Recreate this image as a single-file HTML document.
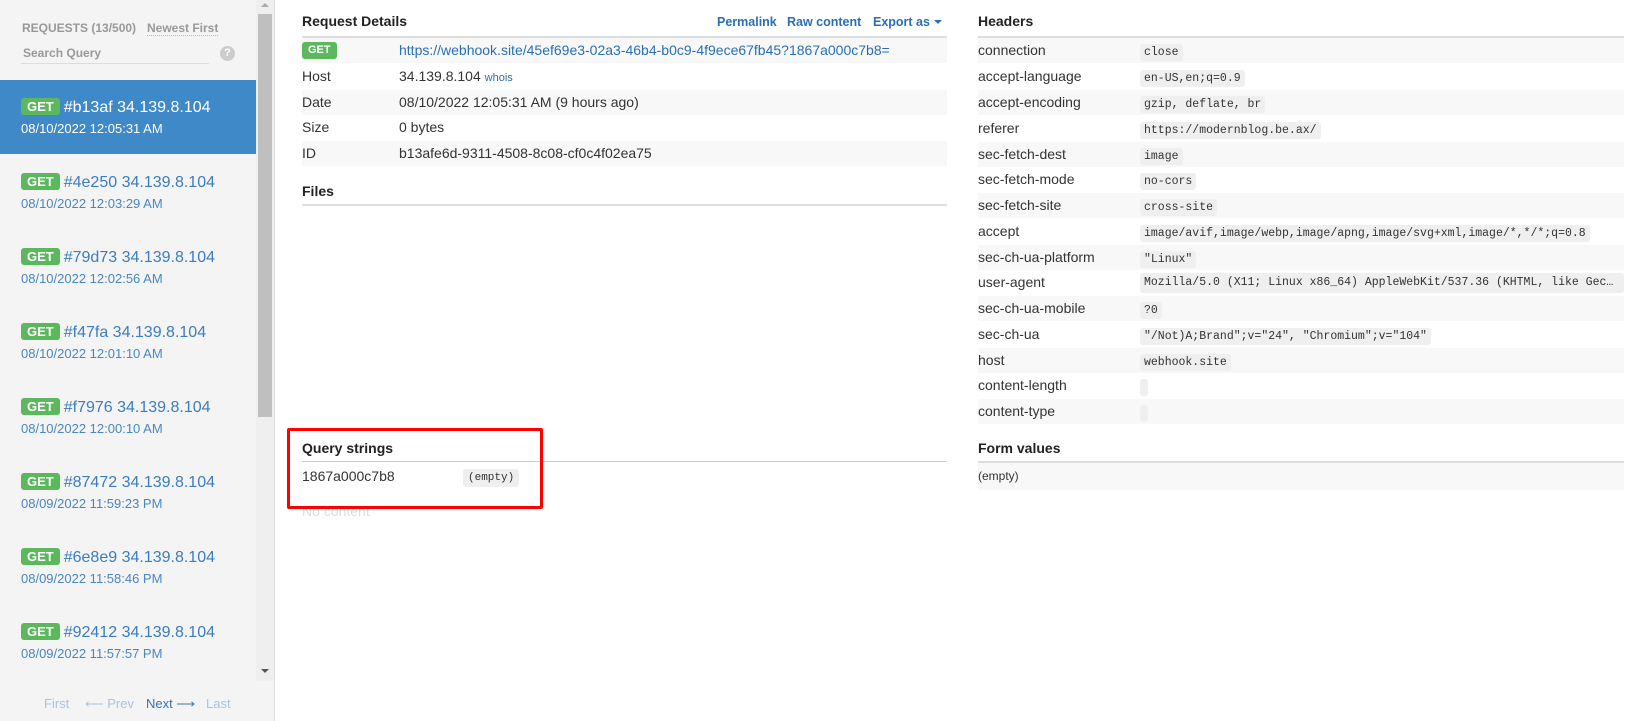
<!DOCTYPE html>
<html><head><meta charset="utf-8"><style>
*{box-sizing:border-box;margin:0;padding:0}
body{width:1650px;height:721px;overflow:hidden;font-family:"Liberation Sans",Arial,sans-serif;font-size:14px;color:#333;background:#fff;position:relative}
.abs{position:absolute;white-space:nowrap}
#side{position:absolute;left:0;top:0;width:275px;height:721px;background:#f4f4f4;border-right:1px solid #ddd}
.get{display:inline-block;background:#5cb85c;color:#fff;font-weight:bold;font-size:12px;border-radius:3px;padding:2px 6px;line-height:15px}
.item{position:absolute;left:0;width:256px;height:74px}
.item .t{position:absolute;left:21px;top:18px;font-size:16px;color:#3b7dbf}
.item .t .get{font-size:13px;padding:1px 6px;margin-right:4px;vertical-align:1px}
.item .d{position:absolute;left:21px;top:41px;font-size:13px;color:#4a86c0}
.item.sel{background:#3f89c9}
.item.sel .t,.item.sel .d{color:#fff}
.h{font-weight:bold;font-size:14px;color:#222}
.line{position:absolute;height:2px;background:#ddd}
.row{position:absolute;height:25px;line-height:25px;font-size:14px;color:#333;white-space:nowrap}
.row.s{background:#f8f8f8}
.code{font-family:"Liberation Mono","DejaVu Sans Mono",monospace;font-size:11.5px;background:#efefef;border-radius:3px;padding:2px 4px;color:#333;white-space:nowrap}
a{color:#2a6fb5;text-decoration:none}
</style></head><body>
<div id="side">
 <div class="abs" style="left:22px;top:21px;font-size:12px;font-weight:bold;color:#999">REQUESTS (13/500)</div>
 <div class="abs" style="left:147px;top:21px;font-size:12px;font-weight:bold;color:#999;border-bottom:1px dotted #bbb">Newest First</div>
 <div class="abs" style="left:21px;top:46px;width:188px;font-size:12px;font-weight:bold;color:#999;border-bottom:1px solid #ddd;padding:0 2px 3px">Search Query</div>
 <div class="abs" style="left:220px;top:46px;width:15px;height:15px;border-radius:50%;background:#ccc;color:#fff;font-size:11px;font-weight:bold;text-align:center;line-height:15px">?</div>
 <div class="item sel" style="top:80px"><div class="t"><span class="get">GET</span>#b13af 34.139.8.104</div><div class="d">08/10/2022 12:05:31 AM</div></div>
 <div class="item" style="top:155px"><div class="t"><span class="get">GET</span>#4e250 34.139.8.104</div><div class="d">08/10/2022 12:03:29 AM</div></div>
 <div class="item" style="top:230px"><div class="t"><span class="get">GET</span>#79d73 34.139.8.104</div><div class="d">08/10/2022 12:02:56 AM</div></div>
 <div class="item" style="top:305px"><div class="t"><span class="get">GET</span>#f47fa 34.139.8.104</div><div class="d">08/10/2022 12:01:10 AM</div></div>
 <div class="item" style="top:380px"><div class="t"><span class="get">GET</span>#f7976 34.139.8.104</div><div class="d">08/10/2022 12:00:10 AM</div></div>
 <div class="item" style="top:455px"><div class="t"><span class="get">GET</span>#87472 34.139.8.104</div><div class="d">08/09/2022 11:59:23 PM</div></div>
 <div class="item" style="top:530px"><div class="t"><span class="get">GET</span>#6e8e9 34.139.8.104</div><div class="d">08/09/2022 11:58:46 PM</div></div>
 <div class="item" style="top:605px"><div class="t"><span class="get">GET</span>#92412 34.139.8.104</div><div class="d">08/09/2022 11:57:57 PM</div></div>
 <div class="abs" style="left:256px;top:0;width:18px;height:681px;background:#efefef"></div>
 <div class="abs" style="left:258px;top:14px;width:14px;height:403px;background:#bfbfbf"></div>
 <div class="abs" style="left:261px;top:3px;width:0;height:0;border-left:4px solid transparent;border-right:4px solid transparent;border-bottom:4px solid #aaa"></div>
 <div class="abs" style="left:261px;top:669px;width:0;height:0;border-left:4px solid transparent;border-right:4px solid transparent;border-top:4px solid #555"></div>
 <div class="abs" style="left:44px;top:696px;font-size:13px;color:#a9c4df">First</div>
 <div class="abs" style="left:85px;top:696px;font-size:13px;color:#a9c4df">⟵ Prev</div>
 <div class="abs" style="left:146px;top:696px;font-size:13px;color:#3b73ad">Next ⟶</div>
 <div class="abs" style="left:206px;top:696px;font-size:13px;color:#a9c4df">Last</div>
</div>

<div class="abs h" style="left:302px;top:13px">Request Details</div>
<div class="abs" style="left:717px;top:15px;font-size:12.5px;font-weight:bold"><a>Permalink</a></div>
<div class="abs" style="left:787px;top:15px;font-size:12.5px;font-weight:bold"><a>Raw content</a></div>
<div class="abs" style="left:873px;top:15px;font-size:12.5px;font-weight:bold"><a>Export as</a><span style="display:inline-block;margin-left:4px;border-left:4px solid transparent;border-right:4px solid transparent;border-top:4px solid #2a6fb5;vertical-align:2px"></span></div>
<div class="line" style="left:302px;top:36px;width:645px"></div>
<div class="row s" style="left:302px;top:38px;width:645px"><span class="get" style="position:absolute;left:0;top:4px;font-size:11px;padding:1px 6px">GET</span><a style="position:absolute;left:97px">https://webhook.site/45ef69e3-02a3-46b4-b0c9-4f9ece67fb45?1867a000c7b8=</a></div>
<div class="row" style="left:302px;top:64px;width:645px"><span>Host</span><span style="position:absolute;left:97px">34.139.8.104 <a style="font-size:11px">whois</a></span></div>
<div class="row s" style="left:302px;top:90px;width:645px"><span>Date</span><span style="position:absolute;left:97px">08/10/2022 12:05:31 AM (9 hours ago)</span></div>
<div class="row" style="left:302px;top:115px;width:645px"><span>Size</span><span style="position:absolute;left:97px">0 bytes</span></div>
<div class="row s" style="left:302px;top:141px;width:645px"><span>ID</span><span style="position:absolute;left:97px">b13afe6d-9311-4508-8c08-cf0c4f02ea75</span></div>
<div class="abs h" style="left:302px;top:183px">Files</div>
<div class="line" style="left:302px;top:204px;width:645px"></div>

<div class="abs h" style="left:302px;top:440px">Query strings</div>
<div class="line" style="left:302px;top:461px;width:645px;height:1px;background:#ccc"></div>
<div class="abs" style="left:302px;top:468px;font-size:14px">1867a000c7b8</div>
<div class="abs" style="left:463px;top:467px"><span class="code" style="font-size:11px;padding:3px 5px">(empty)</span></div>
<div class="abs" style="left:302px;top:503px;font-size:14px;color:#ddd">No content</div>
<div class="abs" style="left:287px;top:428px;width:256px;height:81px;border:3px solid #f00;border-radius:2px"></div>

<div class="abs h" style="left:978px;top:13px">Headers</div>
<div class="line" style="left:978px;top:36px;width:646px"></div>
<div class="row s" style="left:978px;top:38px;width:646px">connection<span style="position:absolute;left:162px"><span class="code">close</span></span></div>
<div class="row" style="left:978px;top:64px;width:646px">accept-language<span style="position:absolute;left:162px"><span class="code">en-US,en;q=0.9</span></span></div>
<div class="row s" style="left:978px;top:90px;width:646px">accept-encoding<span style="position:absolute;left:162px"><span class="code">gzip, deflate, br</span></span></div>
<div class="row" style="left:978px;top:116px;width:646px">referer<span style="position:absolute;left:162px"><span class="code">https://modernblog.be.ax/</span></span></div>
<div class="row s" style="left:978px;top:142px;width:646px">sec-fetch-dest<span style="position:absolute;left:162px"><span class="code">image</span></span></div>
<div class="row" style="left:978px;top:167px;width:646px">sec-fetch-mode<span style="position:absolute;left:162px"><span class="code">no-cors</span></span></div>
<div class="row s" style="left:978px;top:193px;width:646px">sec-fetch-site<span style="position:absolute;left:162px"><span class="code">cross-site</span></span></div>
<div class="row" style="left:978px;top:219px;width:646px">accept<span style="position:absolute;left:162px"><span class="code">image/avif,image/webp,image/apng,image/svg+xml,image/*,*/*;q=0.8</span></span></div>
<div class="row s" style="left:978px;top:245px;width:646px">sec-ch-ua-platform<span style="position:absolute;left:162px"><span class="code">"Linux"</span></span></div>
<div class="row" style="left:978px;top:270px;width:646px">user-agent<span style="position:absolute;left:162px;top:0"><span class="code" style="display:inline-block;width:484px;overflow:hidden;text-overflow:ellipsis;vertical-align:middle;line-height:16px">Mozilla/5.0 (X11; Linux x86_64) AppleWebKit/537.36 (KHTML, like Gecko) Chrome/104</span></span></div>
<div class="row s" style="left:978px;top:296px;width:646px">sec-ch-ua-mobile<span style="position:absolute;left:162px"><span class="code">?0</span></span></div>
<div class="row" style="left:978px;top:322px;width:646px">sec-ch-ua<span style="position:absolute;left:162px"><span class="code">"/Not)A;Brand";v="24", "Chromium";v="104"</span></span></div>
<div class="row s" style="left:978px;top:348px;width:646px">host<span style="position:absolute;left:162px"><span class="code">webhook.site</span></span></div>
<div class="row" style="left:978px;top:373px;width:646px">content-length<span style="position:absolute;left:162px"><span class="code" style="padding:2px 4px"></span></span></div>
<div class="row s" style="left:978px;top:399px;width:646px">content-type<span style="position:absolute;left:162px"><span class="code" style="padding:2px 4px"></span></span></div>
<div class="abs h" style="left:978px;top:440px">Form values</div>
<div class="line" style="left:978px;top:461px;width:646px"></div>
<div class="row s" style="left:978px;top:463px;width:646px;font-size:12px;line-height:27px;height:27px">(empty)</div>
</body></html>
